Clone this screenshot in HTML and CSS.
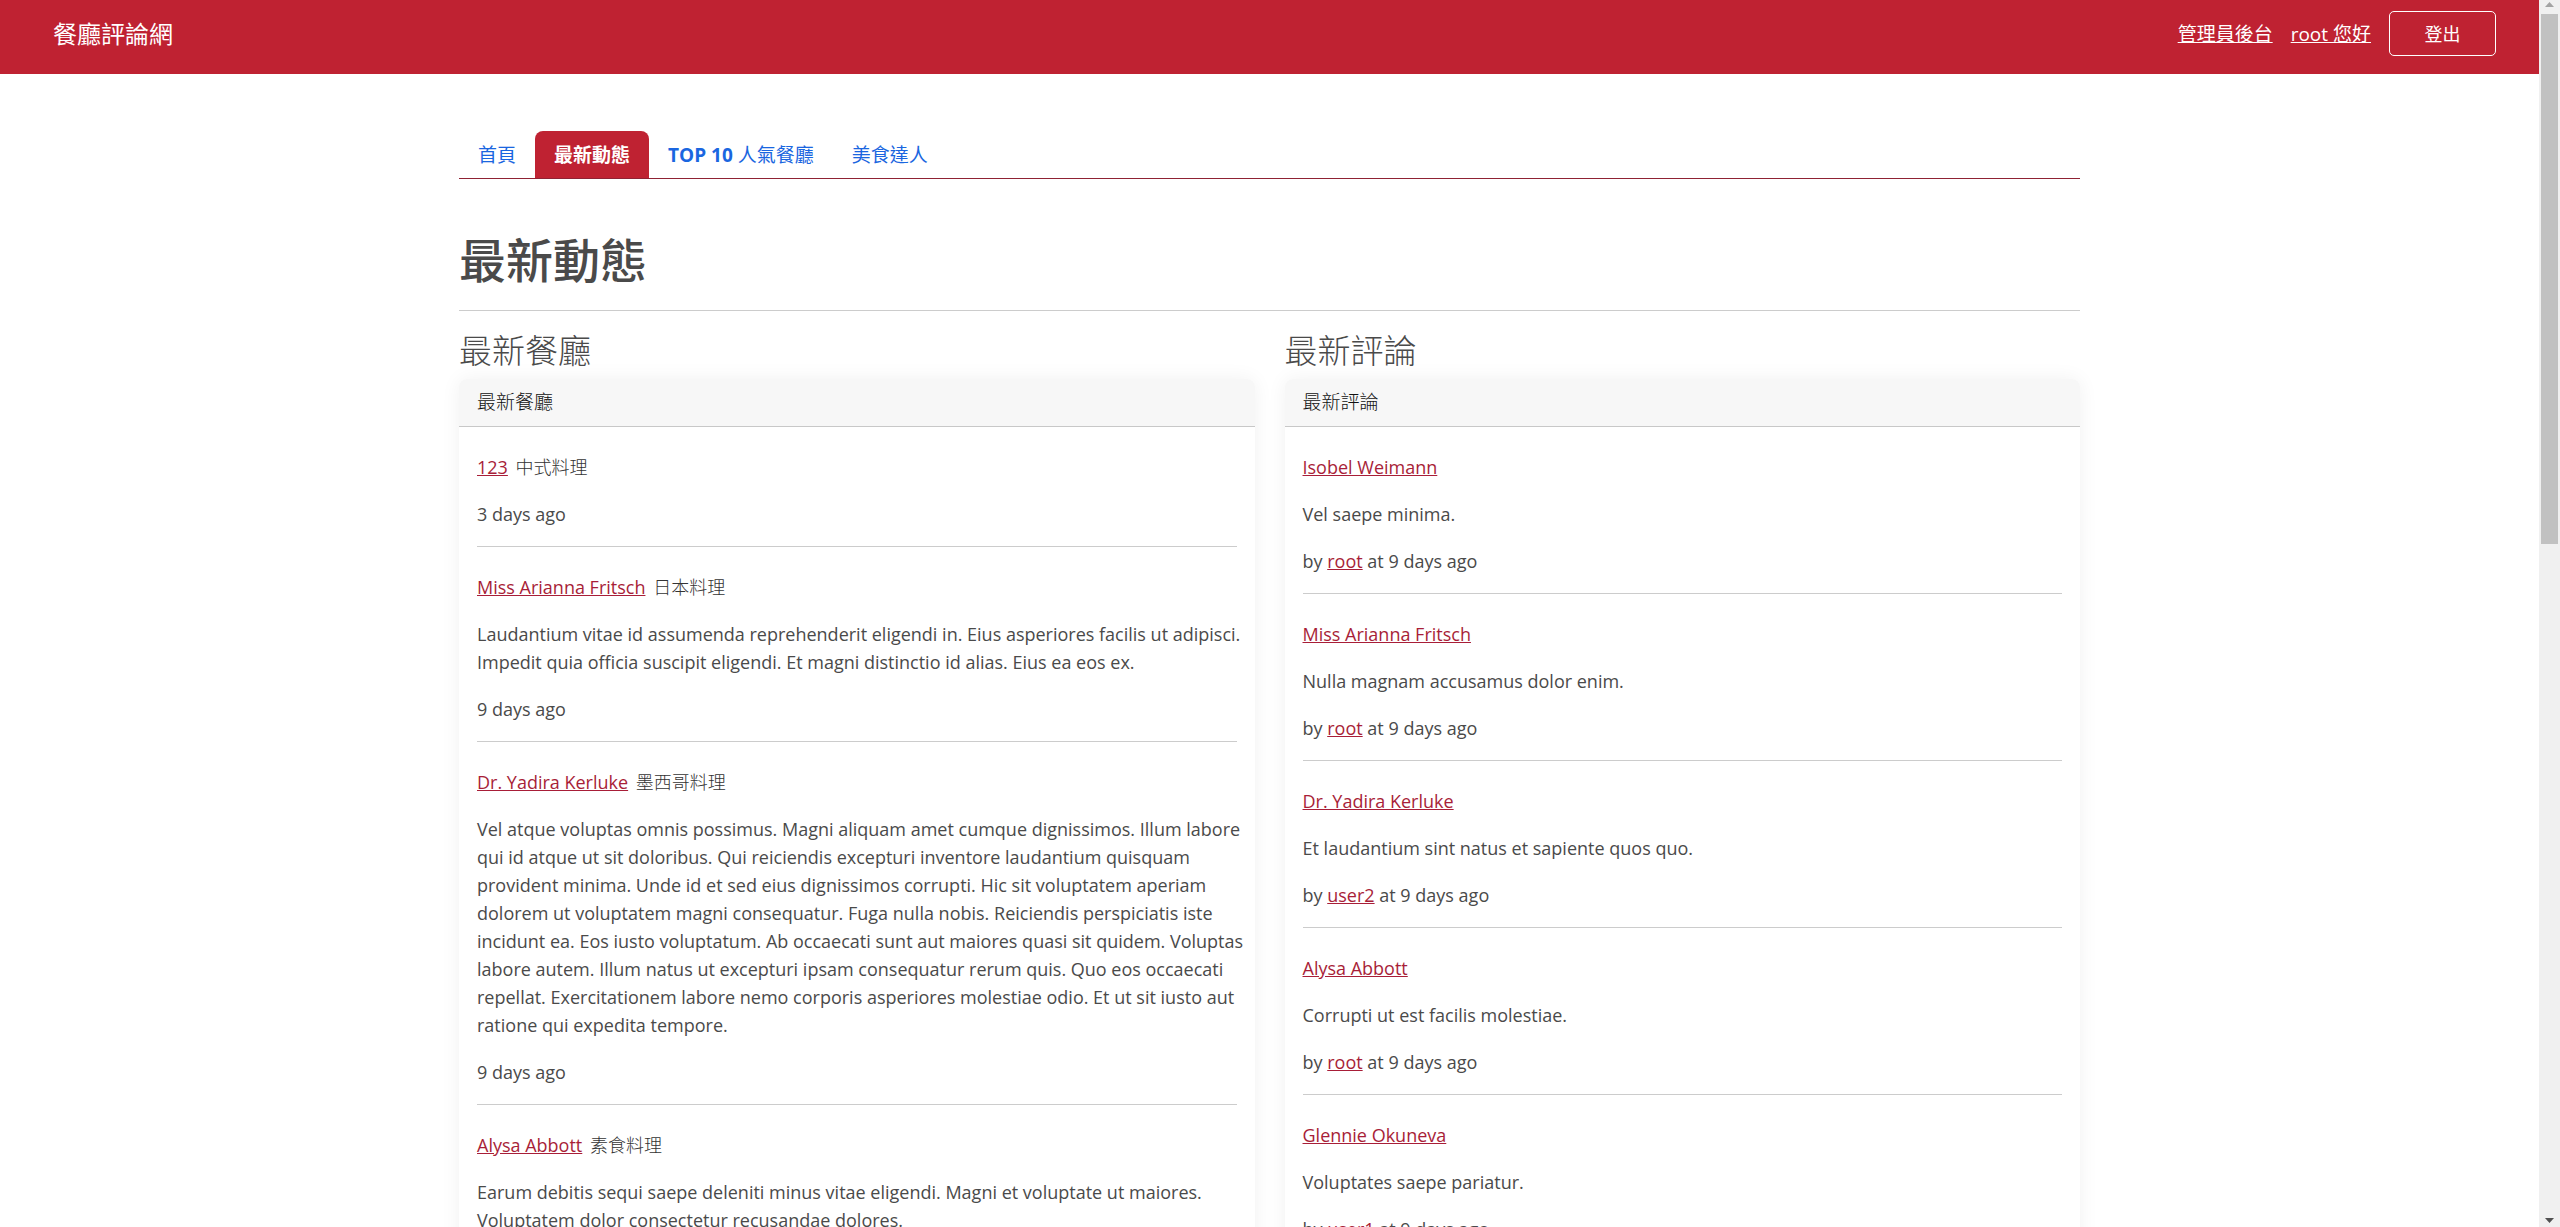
FILE: index.html
```html
<!DOCTYPE html>
<html lang="zh-Hant">
<head>
<meta charset="utf-8">
<title>餐廳評論網</title>
<link rel="stylesheet" href="styles.css">
</head>
<body>
<div class="viewport">
  <header class="navbar">
    <a class="brand" href="#">餐廳評論網</a>
    <nav class="account">
      <a href="#">管理員後台</a>
      <a href="#">root 您好</a>
      <button class="logout" type="button">登出</button>
    </nav>
  </header>
  <main class="container">
    <nav class="tabs">
      <a class="tab tab-regular" href="#">首頁</a>
      <a class="tab active" href="#">最新動態</a>
      <a class="tab" href="#">TOP 10 <span class="tab-regular">人氣餐廳</span></a>
      <a class="tab tab-regular" href="#">美食達人</a>
    </nav>
    <h1>最新動態</h1>
    <div class="columns">
      <section class="column">
        <h2>最新餐廳</h2>
        <div class="card">
          <div class="card-header">最新餐廳</div>
          <div class="card-body">
            <article class="item">
              <p><a href="#">123</a> <small>中式料理</small></p>
              <p>3 days ago</p>
            </article>
            <article class="item">
              <p><a href="#">Miss Arianna Fritsch</a> <small>日本料理</small></p>
              <p class="description">Laudantium vitae id assumenda reprehenderit eligendi in. Eius asperiores facilis ut adipisci.<br>Impedit quia officia suscipit eligendi. Et magni distinctio id alias. Eius ea eos ex.</p>
              <p>9 days ago</p>
            </article>
            <article class="item">
              <p><a href="#">Dr. Yadira Kerluke</a> <small>墨西哥料理</small></p>
              <p class="description">Vel atque voluptas omnis possimus. Magni aliquam amet cumque dignissimos. Illum labore<br>qui id atque ut sit doloribus. Qui reiciendis excepturi inventore laudantium quisquam<br>provident minima. Unde id et sed eius dignissimos corrupti. Hic sit voluptatem aperiam<br>dolorem ut voluptatem magni consequatur. Fuga nulla nobis. Reiciendis perspiciatis iste<br>incidunt ea. Eos iusto voluptatum. Ab occaecati sunt aut maiores quasi sit quidem. Voluptas<br>labore autem. Illum natus ut excepturi ipsam consequatur rerum quis. Quo eos occaecati<br>repellat. Exercitationem labore nemo corporis asperiores molestiae odio. Et ut sit iusto aut<br>ratione qui expedita tempore.</p>
              <p>9 days ago</p>
            </article>
            <article class="item">
              <p><a href="#">Alysa Abbott</a> <small>素食料理</small></p>
              <p class="description">Earum debitis sequi saepe deleniti minus vitae eligendi. Magni et voluptate ut maiores.<br>Voluptatem dolor consectetur recusandae dolores.</p>
              <p>9 days ago</p>
            </article>
          </div>
        </div>
      </section>
      <section class="column">
        <h2>最新評論</h2>
        <div class="card">
          <div class="card-header">最新評論</div>
          <div class="card-body">
            <article class="item">
              <p><a href="#">Isobel Weimann</a></p>
              <p>Vel saepe minima.</p>
              <p>by <a href="#">root</a> at 9 days ago</p>
            </article>
            <article class="item">
              <p><a href="#">Miss Arianna Fritsch</a></p>
              <p>Nulla magnam accusamus dolor enim.</p>
              <p>by <a href="#">root</a> at 9 days ago</p>
            </article>
            <article class="item">
              <p><a href="#">Dr. Yadira Kerluke</a></p>
              <p>Et laudantium sint natus et sapiente quos quo.</p>
              <p>by <a href="#">user2</a> at 9 days ago</p>
            </article>
            <article class="item">
              <p><a href="#">Alysa Abbott</a></p>
              <p>Corrupti ut est facilis molestiae.</p>
              <p>by <a href="#">root</a> at 9 days ago</p>
            </article>
            <article class="item">
              <p><a href="#">Glennie Okuneva</a></p>
              <p>Voluptates saepe pariatur.</p>
              <p>by <a href="#">user1</a> at 9 days ago</p>
            </article>
          </div>
        </div>
      </section>
    </div>
  </main>
</div>
<div class="scrollbar" aria-hidden="true">
  <svg class="arrow" width="9" height="5" viewBox="0 0 9 5"><path d="M4.5 0 9 5H0z" fill="#a3a3a3"/></svg>
  <div class="thumb"></div>
  <svg class="arrow arrow-down" width="9" height="5" viewBox="0 0 9 5"><path d="M0 0h9L4.5 5z" fill="#505050"/></svg>
</div>
</body>
</html>
```
FILE: styles.css
```css
* {
  box-sizing: border-box;
}

body {
  display: flex;
  height: 100vh;
  margin: 0;
  overflow: hidden;
  background: #fff;
  color: #4a4a4a;
  font: 18px/28px "Open Sans", "Noto Sans CJK TC", sans-serif;
}

h1,
h2,
p {
  margin: 0;
}

.viewport {
  flex: 1;
  min-width: 0;
  overflow: hidden;
}

.navbar {
  display: flex;
  justify-content: space-between;
  align-items: flex-start;
  height: 74px;
  padding: 11px 43px 0 53px;
  background: #bf2232;
  color: #fff;
}

.navbar a {
  color: #fff;
}

.brand {
  font-size: 24px;
  line-height: 45px;
  text-decoration: none;
}

.account {
  display: flex;
  align-items: center;
  gap: 18px;
  font-size: 19px;
}

.logout {
  width: 107px;
  height: 45px;
  border: 1px solid #fff;
  border-radius: 5px;
  background: transparent;
  color: #fff;
  font: inherit;
  font-size: 18px;
}

.container {
  max-width: 1621px;
  margin: 0 auto;
  padding-top: 57px;
}

.tabs {
  display: flex;
  border-bottom: 1px solid #8f2234;
}

.tab {
  padding: 10px 19px 9px;
  border-radius: 8px 8px 0 0;
  color: #1a66e0;
  font-weight: 700;
  font-size: 19px;
  text-decoration: none;
}

.tab-regular {
  font-weight: 400;
}

.tab.active {
  background: #bf2232;
  color: #fff;
}

h1 {
  padding: 53px 0 21px;
  border-bottom: 1px solid #ccc;
  font-size: 47px;
  font-weight: 500;
  line-height: 57px;
}

.columns {
  display: grid;
  grid-template-columns: repeat(2, minmax(0, 1fr));
  gap: 30px;
  padding-top: 20px;
}

h2 {
  margin-bottom: 8px;
  font-size: 33px;
  font-weight: 300;
  line-height: 40px;
}

.card {
  border-radius: 8px;
  box-shadow: 0 0 20px rgba(0, 0, 0, 0.06);
}

.card-header {
  padding: 9px 18px 10px;
  border-bottom: 1px solid #c8c8c8;
  border-radius: 8px 8px 0 0;
  background: #f7f7f7;
  color: #111;
  font-size: 19px;
  font-weight: 300;
}

.card-body {
  padding: 0 18px;
}

.item {
  display: grid;
  gap: 19px;
  padding: 26px 0 18px;
  border-bottom: 1px solid #ccc;
}

.item a {
  color: #a81e38;
}

.description {
  white-space: nowrap;
}

small {
  margin-left: 3px;
  color: #333;
  font-size: 18px;
  font-weight: 300;
  line-height: 1;
}

.scrollbar {
  display: flex;
  flex-direction: column;
  align-items: center;
  width: 21px;
  padding: 2px 0 4px;
  background: #f0f0f0;
}

.thumb {
  width: 17px;
  height: 43.4%;
  margin-top: 7px;
  background: #c1c1c1;
}

.arrow-down {
  margin-top: auto;
}
```
